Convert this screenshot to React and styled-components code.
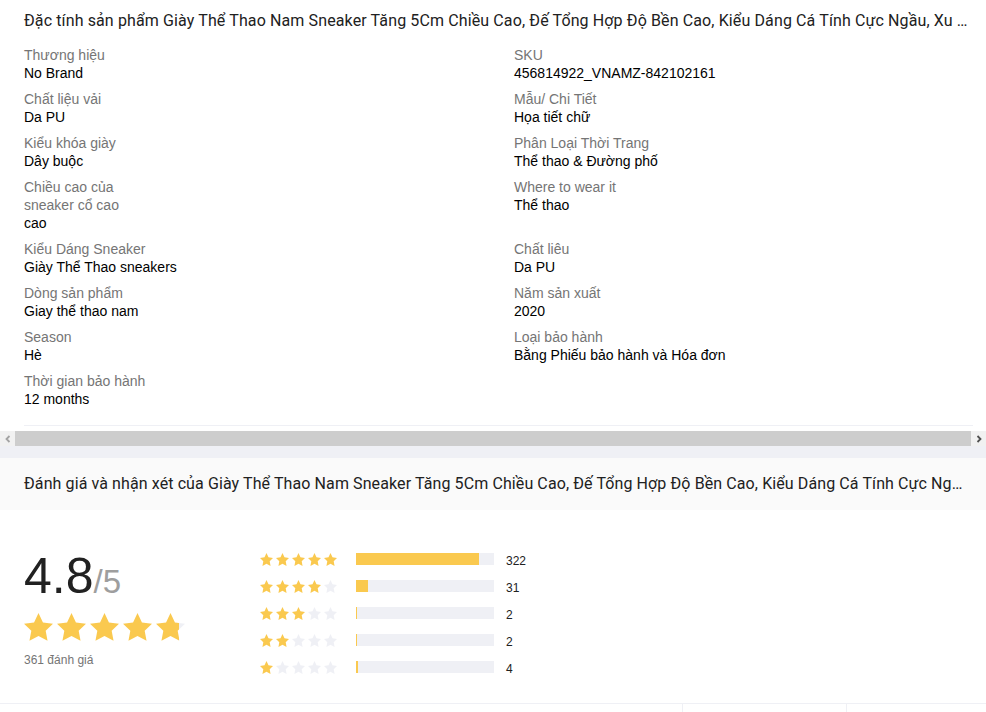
import React, { useId } from 'react'
import styled, { createGlobalStyle } from 'styled-components'

const GlobalStyle = createGlobalStyle`
  body {
    margin: 0;
    background: #fff;
    font-family: "Liberation Sans", Arial, sans-serif;
  }
`

const STAR = 'M12 1.8l3.1 6.5 7 0.9-5.1 4.9 1.3 7L12 17.7l-6.3 3.4 1.3-7L1.9 9.2l7-0.9L12 1.8z'

const Page = styled.div`
  width: 986px;
  background: #fff;
`
const SectionTitle = styled.h2`
  margin: 0;
  padding: 11px 16px 15px 24px;
  font-family: Roboto, "Liberation Sans", sans-serif;
  font-weight: 400;
  font-size: 16px;
  letter-spacing: 0.12px;
  line-height: 20px;
  color: #212121;
  white-space: nowrap;
  overflow: hidden;
  text-overflow: ellipsis;
`
const SpecGrid = styled.dl`
  margin: 0 13px 0 24px;
  padding-bottom: 17px;
  display: grid;
  grid-template-columns: 490px 1fr;
  row-gap: 8px;
  border-bottom: 1px solid #eff0f5;
`
const SpecItem = styled.div`
  font-size: 14px;
  line-height: 18px;
`
const SpecLabel = styled.dt`
  color: #757575;
  max-width: 140px;
`
const SpecValue = styled.dd`
  margin: 0;
  color: #000;
`
const ScrollBar = styled.div`
  margin-top: 5px;
  height: 15px;
  display: flex;
  background: #f1f1f1;
`
const ScrollArrow = styled.div`
  width: 15px;
  display: flex;
  align-items: center;
  justify-content: center;
  color: ${p => (p.$active ? '#505050' : '#a3a3a3')};
`
const ScrollThumb = styled.div`
  flex: 1;
  background: #cdcdcd;
`
const Spacer = styled.div`
  height: 12px;
  background: #eff0f5;
`
const ReviewHeader = styled.h2`
  margin: 0;
  height: 52px;
  padding: 0 18px 0 24px;
  background: #fafafa;
  font-family: Roboto, "Liberation Sans", sans-serif;
  font-weight: 400;
  font-size: 16px;
  letter-spacing: 0.1px;
  line-height: 52px;
  color: #212121;
  white-space: nowrap;
  overflow: hidden;
  text-overflow: ellipsis;
`
const RatingBody = styled.div`
  display: flex;
  padding: 35px 24px 0 24px;
  height: 158px;
`
const Summary = styled.div`
  width: 236px;
`
const Score = styled.div`
  margin-top: 6px;
  font-size: 50px;
  line-height: 50px;
  color: #212121;
`
const ScoreMax = styled.span`
  font-size: 33px;
  line-height: 1;
  color: #9e9e9e;
`
const BigStars = styled.div`
  display: flex;
  gap: 4px;
  margin-top: 12px;
`
const RatingCount = styled.div`
  margin-top: 12px;
  font-size: 12px;
  color: #757575;
`
const Breakdown = styled.div`
  display: flex;
  flex-direction: column;
  gap: 11px;
  padding-top: 6px;
`
const BreakRow = styled.div`
  display: flex;
  align-items: center;
  height: 16px;
`
const SmallStars = styled.div`
  display: flex;
  align-items: center;
  gap: 3px;
  width: 96px;
`
const Bar = styled.div`
  width: 138px;
  height: 12px;
  background: #eff0f5;
`
const BarFill = styled.div`
  height: 100%;
  background: #fac94f;
`
const Count = styled.span`
  margin-left: 12px;
  font-size: 12px;
  color: #212121;
  padding-top: 3px;
`
const Footer = styled.div`
  display: grid;
  grid-template-columns: 682px 164px 1fr;
  border-top: 1px solid #eff0f5;
  height: 20px;
`
const FooterCell = styled.div`
  border-left: ${p => (p.$first ? 'none' : '1px solid #eff0f5')};
`

function Star({ width, height, fill = 1 }) {
  const id = useId()
  return (
    <svg width={width} height={height} viewBox="1.9 1.8 20.2 19.4" preserveAspectRatio="none">
      <defs>
        <linearGradient id={id} x1="0" x2="1" y1="0" y2="0">
          <stop offset={fill} stopColor="#fac94f" />
          <stop offset={fill} stopColor="#eff0f5" />
        </linearGradient>
      </defs>
      <path d={STAR} fill={`url(#${id})`} />
    </svg>
  )
}

function Chevron({ dir }) {
  return (
    <svg width="8" height="8" viewBox="0 0 8 8">
      <path
        d={dir === 'left' ? 'M5.5 1L2.5 4l3 3' : 'M2.5 1l3 3-3 3'}
        fill="none"
        stroke="currentColor"
        strokeWidth="1.8"
      />
    </svg>
  )
}

const specs = [
  ['Thương hiệu', 'No Brand'],
  ['SKU', '456814922_VNAMZ-842102161'],
  ['Chất liệu vải', 'Da PU'],
  ['Mẫu/ Chi Tiết', 'Họa tiết chữ'],
  ['Kiểu khóa giày', 'Dây buộc'],
  ['Phân Loại Thời Trang', 'Thể thao & Đường phố'],
  ['Chiều cao của sneaker cổ cao', 'cao'],
  ['Where to wear it', 'Thể thao'],
  ['Kiểu Dáng Sneaker', 'Giày Thể Thao sneakers'],
  ['Chất liêu', 'Da PU'],
  ['Dòng sản phẩm', 'Giay thể thao nam'],
  ['Năm sản xuất', '2020'],
  ['Season', 'Hè'],
  ['Loại bảo hành', 'Bằng Phiếu bảo hành và Hóa đơn'],
  ['Thời gian bảo hành', '12 months'],
]

const breakdown = [
  { stars: 5, count: 322 },
  { stars: 4, count: 31 },
  { stars: 3, count: 2 },
  { stars: 2, count: 2 },
  { stars: 1, count: 4 },
]
const total = 361
const productName =
  'Giày Thể Thao Nam Sneaker Tăng 5Cm Chiều Cao, Đế Tổng Hợp Độ Bền Cao, Kiểu Dáng Cá Tính Cực Ngầu, Xu Hướng Thời Trang 2020'

export default function App() {
  return (
    <Page>
      <GlobalStyle />
      <SectionTitle>Đặc tính sản phẩm {productName}</SectionTitle>
      <SpecGrid>
        {specs.map(([label, value]) => (
          <SpecItem key={label}>
            <SpecLabel>{label}</SpecLabel>
            <SpecValue>{value}</SpecValue>
          </SpecItem>
        ))}
      </SpecGrid>
      <ScrollBar>
        <ScrollArrow>
          <Chevron dir="left" />
        </ScrollArrow>
        <ScrollThumb />
        <ScrollArrow $active>
          <Chevron dir="right" />
        </ScrollArrow>
      </ScrollBar>
      <Spacer />
      <ReviewHeader>Đánh giá và nhận xét của {productName}</ReviewHeader>
      <RatingBody>
        <Summary>
          <Score>
            4.8<ScoreMax>/5</ScoreMax>
          </Score>
          <BigStars>
            {[1, 1, 1, 1, 0.8].map((f, i) => (
              <Star key={i} width={29} height={28} fill={f} />
            ))}
          </BigStars>
          <RatingCount>361 đánh giá</RatingCount>
        </Summary>
        <Breakdown>
          {breakdown.map(row => (
            <BreakRow key={row.stars}>
              <SmallStars>
                {[1, 2, 3, 4, 5].map(n => (
                  <Star key={n} width={13} height={13} fill={n <= row.stars ? 1 : 0} />
                ))}
              </SmallStars>
              <Bar>
                <BarFill style={{ width: `${Math.max((row.count / total) * 100, 0.8)}%` }} />
              </Bar>
              <Count>{row.count}</Count>
            </BreakRow>
          ))}
        </Breakdown>
      </RatingBody>
      <Footer>
        <FooterCell $first />
        <FooterCell />
        <FooterCell />
      </Footer>
    </Page>
  )
}
